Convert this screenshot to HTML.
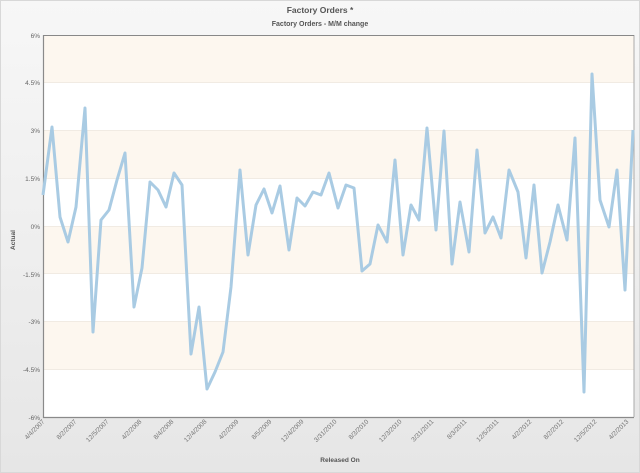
<!DOCTYPE html>
<html><head><style>
html,body{margin:0;padding:0;background:#ececec;}
svg{display:block;font-family:"Liberation Sans",sans-serif;}
</style></head><body>
<svg width="640" height="473" xmlns="http://www.w3.org/2000/svg">
<defs><linearGradient id="bg" x1="0" y1="0" x2="0" y2="1"><stop offset="0" stop-color="#f7f7f7"/><stop offset="1" stop-color="#e6e6e6"/></linearGradient></defs>
<rect x="0" y="0" width="640" height="473" fill="url(#bg)"/>
<rect x="0.5" y="0.5" width="639" height="472" fill="none" stroke="#d8d8d8"/>
<text x="320" y="13" text-anchor="middle" font-size="8.5" font-weight="bold" fill="#555">Factory Orders *</text>
<text x="320" y="26" text-anchor="middle" font-size="7" font-weight="bold" fill="#555">Factory Orders - M/M change</text>
<rect x="43" y="35" width="591" height="382" fill="#fff"/>
<g fill="#fdf7ef">
<rect x="43" y="35" width="591" height="47.7"/>
<rect x="43" y="130.5" width="591" height="47.7"/>
<rect x="43" y="226" width="591" height="47.7"/>
<rect x="43" y="321.5" width="591" height="47.7"/>
</g>
<g stroke="#f1ebe3" stroke-width="1">
<line x1="43" y1="82.5" x2="634" y2="82.5"/><line x1="43" y1="130.5" x2="634" y2="130.5"/><line x1="43" y1="178.5" x2="634" y2="178.5"/><line x1="43" y1="226.5" x2="634" y2="226.5"/><line x1="43" y1="273.5" x2="634" y2="273.5"/><line x1="43" y1="321.5" x2="634" y2="321.5"/><line x1="43" y1="369.5" x2="634" y2="369.5"/>
</g>
<path d="M43.5 35 V417.5 H634" fill="none" stroke="#8a8a8a" stroke-width="1.2"/>
<line x1="634" y1="35" x2="634" y2="417" stroke="#aaa" stroke-width="1"/>
<line x1="43" y1="35.5" x2="634" y2="35.5" stroke="#888" stroke-width="1"/>
<g font-size="6.5" fill="#666" text-anchor="end">
<text x="40" y="38">6%</text><text x="40" y="85">4.5%</text><text x="40" y="133">3%</text><text x="40" y="181">1.5%</text><text x="40" y="229">0%</text><text x="40" y="277">-1.5%</text><text x="40" y="324">-3%</text><text x="40" y="372">-4.5%</text><text x="40" y="420">-6%</text>
</g>
<text transform="translate(15,240) rotate(-90)" text-anchor="middle" font-size="6.5" font-weight="bold" fill="#555">Actual</text>
<text x="340" y="462" text-anchor="middle" font-size="6.5" font-weight="bold" fill="#555">Released On</text>
<g font-size="6.5" fill="#777" text-anchor="end">
<text transform="translate(45,422) rotate(-45)">4/4/2007</text>
<text transform="translate(77,422) rotate(-45)">8/2/2007</text>
<text transform="translate(109,422) rotate(-45)">12/5/2007</text>
<text transform="translate(142,422) rotate(-45)">4/2/2008</text>
<text transform="translate(174,422) rotate(-45)">8/4/2008</text>
<text transform="translate(207,422) rotate(-45)">12/4/2008</text>
<text transform="translate(239,422) rotate(-45)">4/2/2009</text>
<text transform="translate(272,422) rotate(-45)">8/5/2009</text>
<text transform="translate(304,422) rotate(-45)">12/4/2009</text>
<text transform="translate(337,422) rotate(-45)">3/31/2010</text>
<text transform="translate(369,422) rotate(-45)">8/3/2010</text>
<text transform="translate(402,422) rotate(-45)">12/3/2010</text>
<text transform="translate(434,422) rotate(-45)">3/31/2011</text>
<text transform="translate(467,422) rotate(-45)">8/3/2011</text>
<text transform="translate(499,422) rotate(-45)">12/5/2011</text>
<text transform="translate(532,422) rotate(-45)">4/2/2012</text>
<text transform="translate(564,422) rotate(-45)">8/2/2012</text>
<text transform="translate(597,422) rotate(-45)">12/5/2012</text>
<text transform="translate(629,422) rotate(-45)">4/2/2013</text>
</g>
<polyline fill="none" stroke="#a9cbe3" stroke-width="3" stroke-linejoin="round" points="43,195 52,127 60,217 68,242 76,207 85,108 93,332 101,220 109,210 117,180 125,153 134,307 142,268 150,182 158,190 166,207 174,173 182,185 191,354 199,307 207,389 215,372 223,352 231,287 240,170 248,255 256,205 264,189 272,213 280,186 289,250 297,198 305,206 313,192 321,195 329,173 338,208 346,185 354,188 362,271 370,264 378,225 387,242 395,160 403,255 411,205 419,220 427,128 436,230 444,131 452,264 460,202 469,252 477,150 485,233 493,217 501,238 509,170 518,192 526,258 534,185 542,273 550,242 558,205 567,240 575,138 584,392 592,74 600,200 609,227 617,170 625,290 633,130"/>
</svg>
</body></html>
